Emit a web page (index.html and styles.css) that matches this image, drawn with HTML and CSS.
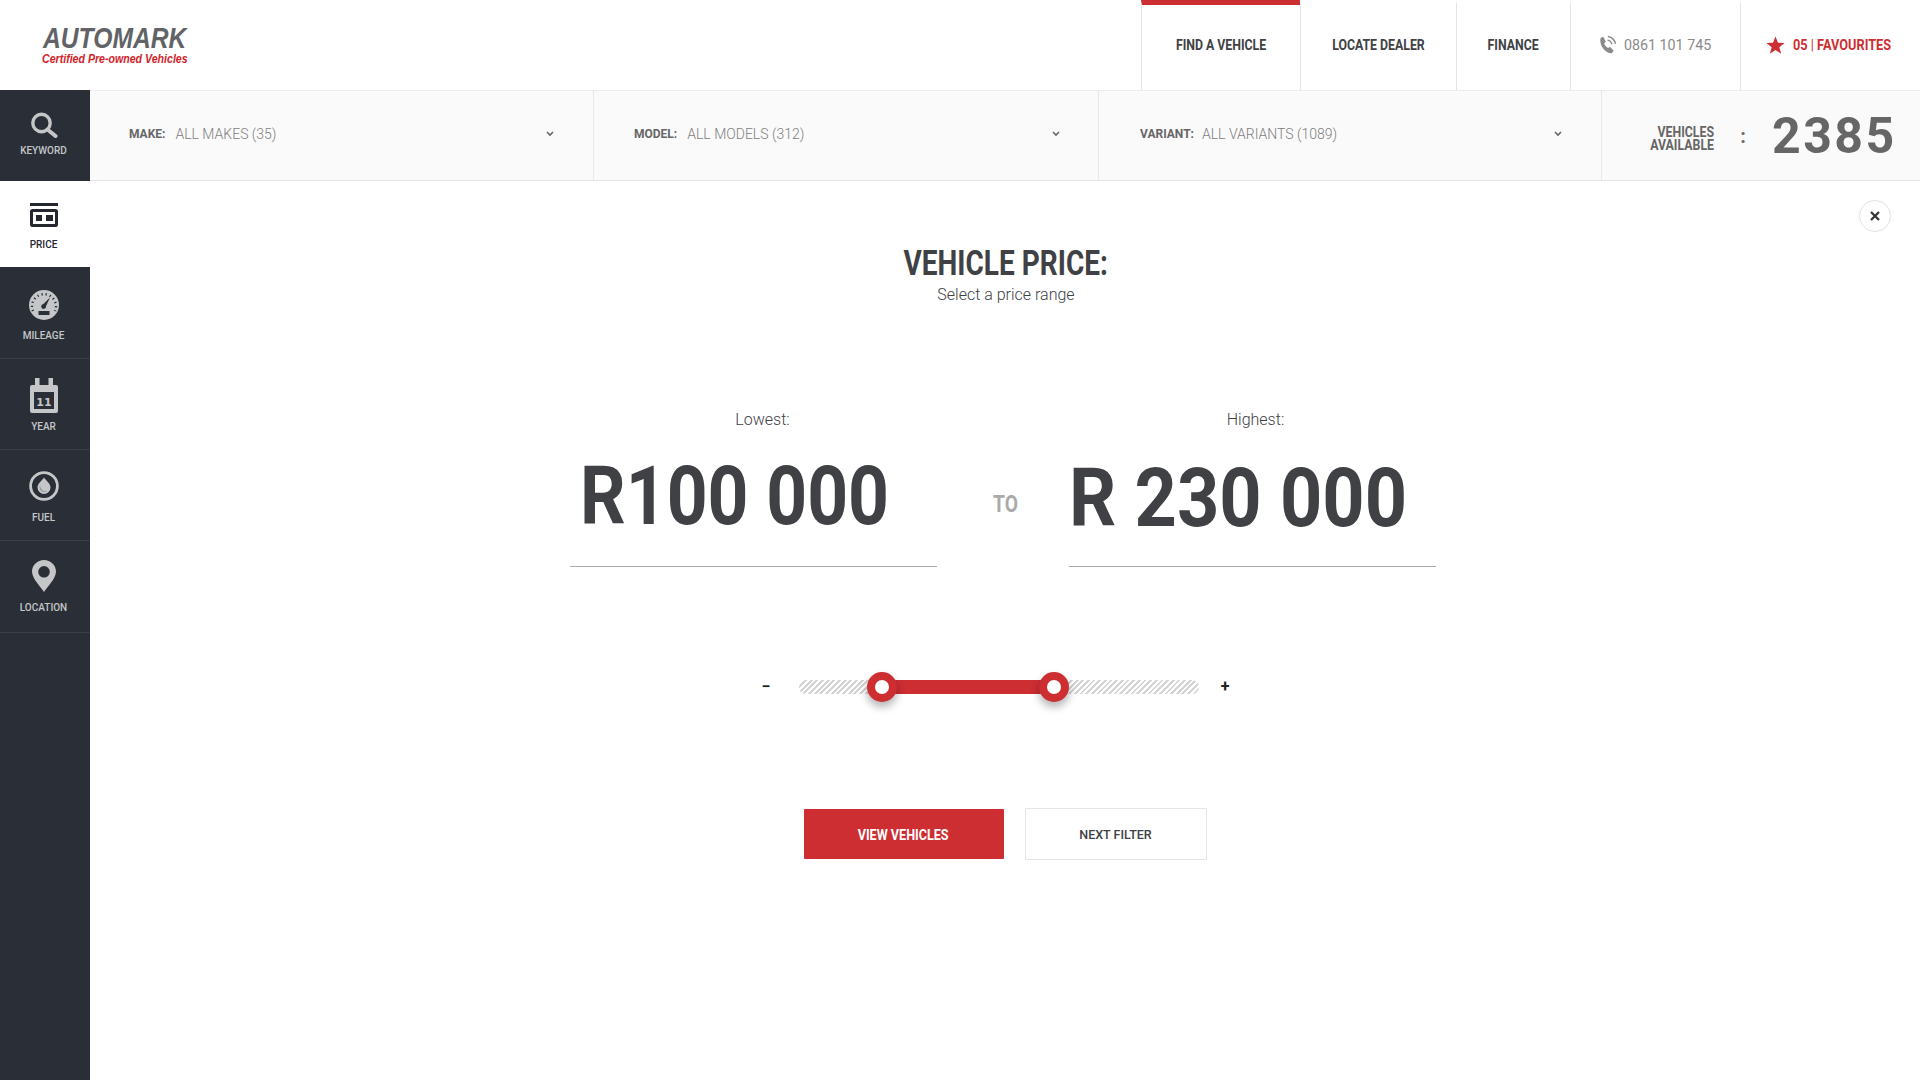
FILE: index.html
```html
<!DOCTYPE html>
<html lang="en">
	<head>
		<meta charset="utf-8" />
		<title>Automark - Find a Vehicle</title>
		<link rel="stylesheet" href="styles.css">
	</head>
	<body>
		<header class="topbar">
			<a class="logo" href="#">
				<span class="logo-name">AUTOMARK</span>
				<span class="logo-sub">Certified Pre-owned Vehicles</span>
			</a>
			<nav class="nav">
				<a class="nav-item active" href="#"><span class="nav-text">FIND A VEHICLE</span></a>
				<a class="nav-item" href="#"><span class="nav-text">LOCATE DEALER</span></a>
				<a class="nav-item" href="#"><span class="nav-text">FINANCE</span></a>
				<a class="nav-item phone" href="#">
					<svg class="phone-icon" viewBox="0 0 18 18" width="20" height="20">
						<path d="M3.2 2.6 5.6 1.6 8 6 6.4 7.4C6.8 9 8.4 11 10.1 11.8L11.7 10.6 15 14.2 13.2 16.4C8.6 17 1.4 9.6 3.2 2.6Z" fill="#8a8a8a"/>
						<path d="M9.4 4.6C11.4 4.8 13 6.4 13.3 8.4M9.8 1.4C13 1.6 16.2 4.6 16.6 8" fill="none" stroke="#8a8a8a" stroke-width="1.3"/>
					</svg>
					<span class="phone-text">0861 101 745</span>
				</a>
				<a class="nav-item favourites" href="#">
					<svg viewBox="0 0 20 20" width="19" height="19"><polygon points="10,0.5 12.6,7.2 19.6,7.4 14,11.8 16,18.8 10,14.8 4,18.8 6,11.8 0.4,7.4 7.4,7.2" fill="#cc2e32"/></svg>
					<span class="fav-text">05 <i>|</i> FAVOURITES</span>
				</a>
			</nav>
		</header>

		<div class="page">
			<aside class="sidebar">
				<a class="side-item keyword" href="#">
					<span class="side-icon">
						<svg viewBox="0 0 28 26" width="28" height="26"><circle cx="11.5" cy="11" r="8.7" fill="none" stroke="#c4c6c8" stroke-width="3.4"/><path d="M17.5 17.5 25.5 24" stroke="#c4c6c8" stroke-width="4" stroke-linecap="round"/></svg>
					</span>
					<span class="side-label">KEYWORD</span>
				</a>
				<a class="side-item price active" href="#">
					<span class="side-icon">
						<svg viewBox="0 0 30 24" width="30" height="24"><path d="M1 0H29V3H1Z" fill="#24272e"/><rect x="2.5" y="7.5" width="25" height="15" rx="1" fill="none" stroke="#24272e" stroke-width="3"/><path d="M7 12H13V18H7ZM17 12H24V18H17Z" fill="#24272e"/></svg>
					</span>
					<span class="side-label">PRICE</span>
				</a>
				<a class="side-item mileage" href="#">
					<span class="side-icon">
						<svg viewBox="0 0 30 30" width="30" height="30">
							<circle cx="15" cy="15" r="15" fill="#c4c6c8"/>
							<path d="M4 21A12 12 0 1 1 26 21" fill="none" stroke="#2a2e37" stroke-width="2.4" stroke-dasharray="1.2 3"/>
							<path d="M13.4 15 21 7.5 16.4 17.6Z" fill="#2a2e37"/>
							<circle cx="14.6" cy="16.6" r="2.4" fill="#2a2e37"/>
							<rect x="9.5" y="21" width="11" height="4" fill="#2a2e37"/>
						</svg>
					</span>
					<span class="side-label">MILEAGE</span>
				</a>
				<a class="side-item" href="#">
					<span class="side-icon">
						<svg viewBox="0 0 28 35" width="28" height="35">
							<path d="M2 7H5V0H9.500V7H18.500V0H23V7H26Q28 7 28 9V33Q28 35 26 35H2Q0 35 0 33V9Q0 7 2 7Z" fill="#c4c6c8"/>
							<rect x="4" y="14" width="20" height="17" fill="#2a2e37"/>
							<text x="14" y="27.500" class="calendar-day">11</text>
						</svg>
					</span>
					<span class="side-label">YEAR</span>
				</a>
				<a class="side-item" href="#">
					<span class="side-icon">
						<svg viewBox="0 0 30 30" width="30" height="30">
							<circle cx="15" cy="15" r="13.400" fill="none" stroke="#c4c6c8" stroke-width="2.800"/>
							<path d="M15 6.500C17 9.500 21.500 12.500 21.500 16.500A6.500 6.500 0 0 1 8.500 16.500C8.500 12.500 13 9.500 15 6.500Z" fill="#c4c6c8"/>
							<path d="M11 14.500A5 5 0 0 0 18 20.500A6 6 0 0 1 11 14.500Z" fill="#85888c"/>
						</svg>
					</span>
					<span class="side-label">FUEL</span>
				</a>
				<a class="side-item location" href="#">
					<span class="side-icon">
						<svg viewBox="0 0 24 32" width="24" height="32"><path fill-rule="evenodd" d="M12 0C18.6 0 24 5.2 24 11.6 24 19 15 27 12 32 9 27 0 19 0 11.6 0 5.2 5.4 0 12 0ZM12 6A5.8 5.8 0 1 0 12 17.6 5.8 5.8 0 1 0 12 6Z" fill="#c4c6c8"/></svg>
					</span>
					<span class="side-label">LOCATION</span>
				</a>
			</aside>

			<main class="content">
				<section class="filters">
					<div class="filter">
						<b>MAKE:</b><span>ALL MAKES (35)</span>
						<svg class="chevron" viewBox="0 0 8 6" width="8" height="6"><path d="M1 1 4 4 7 1" fill="none" stroke="#666" stroke-width="1.6"/></svg>
					</div>
					<div class="filter">
						<b>MODEL:</b><span>ALL MODELS (312)</span>
						<svg class="chevron" viewBox="0 0 8 6" width="8" height="6"><path d="M1 1 4 4 7 1" fill="none" stroke="#666" stroke-width="1.6"/></svg>
					</div>
					<div class="filter">
						<b>VARIANT:</b><span>ALL VARIANTS (1089)</span>
						<svg class="chevron" viewBox="0 0 8 6" width="8" height="6"><path d="M1 1 4 4 7 1" fill="none" stroke="#666" stroke-width="1.6"/></svg>
					</div>
					<div class="available">
						<span class="available-label">VEHICLES<br>AVAILABLE</span>
						<span class="available-colon">:</span>
						<span class="available-count">2385</span>
					</div>
				</section>

				<section class="panel">
					<button class="close" type="button">
						<svg viewBox="0 0 10 10" width="10" height="10"><path d="M1 1 9 9M9 1 1 9" stroke="#333" stroke-width="2.2"/></svg>
					</button>

					<h1><span>VEHICLE PRICE:</span></h1>
					<p class="subtitle">Select a price range</p>

					<div class="range">
						<div class="range-box lowest">
							<p class="range-label">Lowest:</p>
							<div class="range-value"><span>R100 000</span></div>
						</div>
						<div class="range-to"><span>TO</span></div>
						<div class="range-box highest">
							<p class="range-label">Highest:</p>
							<div class="range-value"><span>R 230 000</span></div>
						</div>
					</div>

					<div class="slider">
						<span class="slider-sign minus">&minus;</span>
						<div class="track">
							<div class="track-fill"></div>
							<span class="handle handle-low"></span>
							<span class="handle handle-high"></span>
						</div>
						<span class="slider-sign plus">+</span>
					</div>

					<div class="actions">
						<a class="btn btn-red" href="#"><span>VIEW VEHICLES</span></a>
						<a class="btn btn-plain" href="#">NEXT FILTER</a>
					</div>
				</section>
			</main>
		</div>
	</body>
</html>
```

FILE: styles.css
```css
*{
	box-sizing: border-box;
}

body{
	margin: 0;
	background-color: #fff;
	color: #404144;
	font-family: Roboto, "Liberation Sans", sans-serif;
}

a{
	color: inherit;
	text-decoration: none;
}

/* top bar */
.topbar{
	display: flex;
	justify-content: space-between;
	height: 90px;
}

.logo{
	display: flex;
	flex-direction: column;
	padding-left: 43px;
	padding-top: 24px;
	font-family: "Liberation Sans", sans-serif;
	font-style: italic;
	font-weight: bold;
	white-space: nowrap;
}

.logo-name{
	font-size: 29px;
	line-height: 29px;
	color: #626366;
	transform: scaleX(.85);
	transform-origin: left;
}

.logo-sub{
	margin-left: -1px;
	font-size: 13px;
	line-height: 12px;
	color: #d2232a;
	transform: scaleX(.815);
	transform-origin: left;
}

.nav{
	display: grid;
	grid-template-columns: 159px 156px 114px 170px 180px;
}

.nav-item{
	display: flex;
	align-items: center;
	justify-content: center;
	border-left: 1px solid #e3e3e3;
	border-top: 5px solid transparent;
	padding-bottom: 5px;
	font-size: 15px;
	font-weight: bold;
	white-space: nowrap;
}

.nav-item.active{
	border-top-color: #cc2e32;
}

.nav-text{
	transform: scaleX(.82);
}

.phone{
	gap: 7px;
	padding-right: 3px;
	font-weight: normal;
	color: #8a8a8a;
}

.phone-text{
	width: 88px;
	transform: scaleX(.95);
	transform-origin: left;
}

.favourites{
	gap: 8px;
	justify-content: flex-start;
	padding-left: 25px;
	color: #cc2e32;
}

.fav-text{
	transform: scaleX(.85);
	transform-origin: left;
}

.fav-text i{
	font-style: normal;
	font-weight: normal;
}

/* page */
.page{
	display: flex;
	min-height: 990px;
}

.sidebar{
	flex: 0 0 90px;
	background-color: #2a2e37;
}

.side-item{
	display: flex;
	flex-direction: column;
	align-items: center;
	height: 91px;
	padding-top: 18px;
	padding-right: 3px;
	border-bottom: 1px solid #3a3e47;
	color: #c4c6c8;
}

.side-icon{
	display: flex;
	align-items: center;
	justify-content: center;
	height: 36px;
	margin-left: 1px;
}

.side-label{
	margin-top: 8px;
	font-size: 10px;
	font-weight: 500;
	line-height: 12px;
}

.side-item.keyword{
	padding-top: 17px;
	border-bottom: 0;
}

.side-item.keyword .side-icon{
	margin-left: 0;
}

.side-item.keyword .side-label{
	margin-top: 2px;
}

.side-item.price{
	height: 86px;
	padding-top: 16px;
	border-bottom: 0;
	background-color: #fff;
	color: #24272e;
}

.side-item.price .side-icon{
	margin-left: 0;
}

.side-item.price .side-label{
	margin-top: 6px;
}

.side-item.mileage{
	height: 92px;
	padding-top: 20px;
}

.side-item.mileage .side-label{
	margin-top: 7px;
}

.side-item.location{
	height: 92px;
	padding-top: 17px;
}

.calendar-day{
	font-family: "DejaVu Sans", sans-serif;
	font-size: 11px;
	font-weight: bold;
	fill: #c4c6c8;
	text-anchor: middle;
}

.content{
	flex: 1;
	min-width: 0;
}

/* filter bar */
.filters{
	display: grid;
	grid-template-columns: 504px 505px 503px 318px;
	height: 91px;
	background-color: #fafafa;
	border-top: 1px solid #ececec;
	border-bottom: 1px solid #e3e3e3;
}

.filter{
	display: flex;
	align-items: center;
	gap: 10px;
	padding: 0 39px 4px 39px;
	border-right: 1px solid #e8e8e8;
	font-size: 14px;
	font-weight: 300;
	color: #808080;
}

.filter:nth-child(2){
	padding-left: 40px;
	padding-right: 38px;
}

.filter:nth-child(3){
	gap: 8px;
	padding-left: 41px;
	padding-right: 39px;
}

.filter b{
	font-size: 12px;
	font-weight: bold;
	color: #666;
}

.chevron{
	margin-left: auto;
}

.available{
	display: flex;
	align-items: center;
	padding-left: 32px;
	color: #666;
}

.available-label{
	width: 80px;
	margin-top: 6px;
	font-size: 14px;
	font-weight: bold;
	line-height: 13px;
	text-align: right;
	white-space: nowrap;
	transform: scaleX(.88);
	transform-origin: right;
}

.available-colon{
	width: 58px;
	font-size: 20px;
	font-weight: bold;
	text-align: center;
}

.available-count{
	font-size: 50px;
	font-weight: bold;
	letter-spacing: 2.5px;
}

/* price panel */
.panel{
	position: relative;
	padding-top: 63px;
	text-align: center;
}

.close{
	position: absolute;
	top: 19px;
	right: 29px;
	display: flex;
	align-items: center;
	justify-content: center;
	width: 32px;
	height: 32px;
	padding: 0;
	border: 1px solid #e3e3e3;
	border-radius: 50%;
	background-color: #fff;
}

h1{
	margin: 0;
	padding-left: 2px;
	font-size: 35px;
	font-weight: bold;
	line-height: 40px;
}

h1 span{
	display: inline-block;
	transform: scaleX(.8);
}

.subtitle{
	margin: 1px 0 0;
	padding-left: 2px;
	font-size: 16px;
	font-weight: 300;
	line-height: 20px;
}

.range{
	display: flex;
	justify-content: center;
	margin-top: 105px;
	margin-right: 5px;
}

.range-box{
	width: 367px;
	text-align: left;
	border-bottom: 1px solid #aaa;
}

.range-label{
	margin: 0;
	font-size: 16px;
	font-weight: 300;
	line-height: 20px;
	text-align: center;
}

.lowest .range-label{
	padding-left: 19px;
}

.highest .range-label{
	padding-left: 7px;
}

.range-value{
	height: 115px;
	margin-top: 21px;
	font-size: 82px;
	font-weight: bold;
	line-height: 90px;
	white-space: nowrap;
}

.range-value span{
	display: inline-block;
	transform-origin: left;
}

.lowest .range-value{
	padding-left: 10px;
}

.lowest .range-value span{
	transform: scaleX(.87);
}

.highest .range-value span{
	transform: translateY(2px) scaleX(.9);
}

.range-to{
	width: 132px;
	padding-top: 80px;
	padding-left: 6px;
	font-size: 24px;
	font-weight: bold;
	color: #aaa;
}

.range-to span{
	display: inline-block;
	transform: scaleX(.8);
}

/* slider */
.slider{
	display: flex;
	align-items: center;
	justify-content: center;
	margin-top: 113px;
	margin-right: 26px;
}

.slider-sign{
	font-size: 16px;
	font-weight: bold;
	line-height: 14px;
	color: #222;
}

.minus{
	width: 66px;
}

.plus{
	width: 52px;
}

.track{
	position: relative;
	width: 400px;
	height: 14px;
	border-radius: 7px;
	background: repeating-linear-gradient(135deg, #d4d4d4 0 2px, #fff 2px 4px);
}

.track-fill{
	position: absolute;
	top: 0;
	bottom: 0;
	left: 83px;
	width: 172px;
	background-color: #cc2e32;
}

.handle{
	position: absolute;
	top: -8px;
	width: 30px;
	height: 30px;
	border: 8px solid #cc2e32;
	border-radius: 50%;
	background-color: #fff;
	box-shadow: 0 5px 8px rgba(0, 0, 0, .3);
}

.handle-low{
	left: 68px;
}

.handle-high{
	left: 240px;
}

/* buttons */
.actions{
	display: flex;
	justify-content: center;
	align-items: center;
	gap: 21px;
	margin-top: 114px;
}

.btn{
	display: flex;
	align-items: center;
	justify-content: center;
	border-radius: 1px;
	white-space: nowrap;
}

.btn-red{
	width: 200px;
	height: 50px;
	padding-top: 1px;
	background-color: #cc2e32;
	color: #fff;
	font-size: 15px;
	font-weight: bold;
}

.btn-red span{
	transform: scaleX(.84);
}

.btn-plain{
	width: 182px;
	height: 52px;
	border: 1px solid #e5e5e5;
	font-size: 12.5px;
	font-weight: 500;
}
```
